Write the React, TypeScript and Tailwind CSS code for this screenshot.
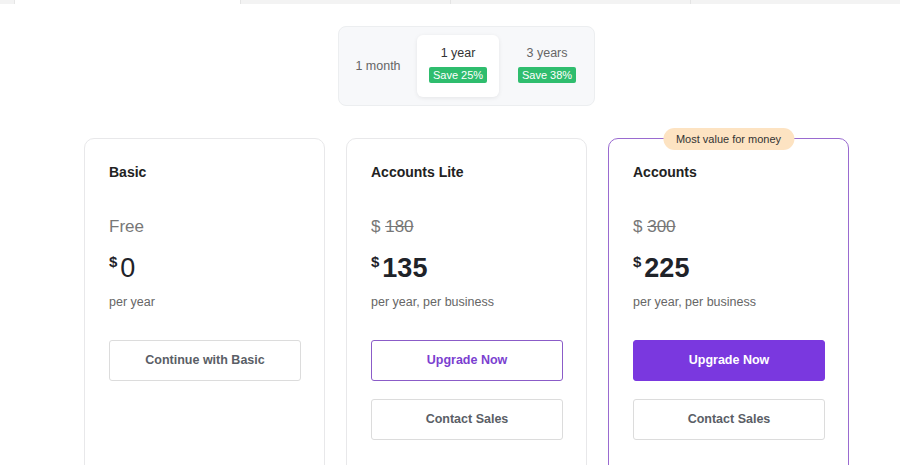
import React from "react";

type Plan = {
  name: string;
  oldPrice?: string;
  freeLabel?: boolean;
  price: string;
  bold: boolean;
  period: string;
  featured?: boolean;
  buttons: { label: string; kind: "outline" | "primary" | "plain" }[];
};

const plans: Plan[] = [
  {
    name: "Basic",
    freeLabel: true,
    price: "0",
    bold: false,
    period: "per year",
    buttons: [{ label: "Continue with Basic", kind: "plain" }],
  },
  {
    name: "Accounts Lite",
    oldPrice: "180",
    price: "135",
    bold: true,
    period: "per year, per business",
    buttons: [
      { label: "Upgrade Now", kind: "outline" },
      { label: "Contact Sales", kind: "plain" },
    ],
  },
  {
    name: "Accounts",
    oldPrice: "300",
    price: "225",
    bold: true,
    period: "per year, per business",
    featured: true,
    buttons: [
      { label: "Upgrade Now", kind: "primary" },
      { label: "Contact Sales", kind: "plain" },
    ],
  },
];

const btnStyles = {
  plain: "border border-[#dcdcdc] text-[#5a5e66] bg-white",
  outline: "border border-[#8b5cc8] text-[#7b3fd0] bg-white",
  primary: "bg-[#7a38df] text-white border border-[#7a38df]",
};

function PlanCard({ plan }: { plan: Plan }) {
  return (
    <div
      className={`relative w-[241px] h-[340px] rounded-[10px] bg-white px-6 pt-[23px] ${
        plan.featured ? "border border-[#9a6bd0]" : "border border-[#e8e8ea]"
      }`}
    >
      {plan.featured && (
        <div className="absolute left-1/2 -translate-x-1/2 -top-[11px] h-[22px] px-[13px] rounded-full bg-[#fde3c2] text-[11px] leading-[22px] text-[#333] whitespace-nowrap">
          Most value for money
        </div>
      )}
      <h3 className="text-[14px] leading-5 font-bold text-[#222]">{plan.name}</h3>

      <div className="mt-[33px] h-6 text-[17px] leading-6 text-[#777]">
        {plan.freeLabel ? (
          "Free"
        ) : (
          <span>
            $ <span className="line-through">{plan.oldPrice}</span>
          </span>
        )}
      </div>

      <div className="mt-[13px] flex items-start h-8 text-[#1f2329]">
        <span className="text-[15px] leading-5 font-bold mr-[3px]">$</span>
        <span className={`text-[27px] leading-8 ${plan.bold ? "font-bold" : "font-normal"}`}>
          {plan.price}
        </span>
      </div>

      <p className="mt-[9px] text-[12.5px] leading-[18px] text-[#666]">{plan.period}</p>

      <div className="mt-[29px] flex flex-col gap-[18px]">
        {plan.buttons.map((b) => (
          <button
            key={b.label}
            className={`w-[192px] h-[41px] rounded-[3px] text-[12.5px] font-bold ${btnStyles[b.kind]}`}
          >
            {b.label}
          </button>
        ))}
      </div>
    </div>
  );
}

export default function App() {
  return (
    <div
      className="w-[900px] h-[465px] overflow-hidden bg-white"
      style={{ fontFamily: '"Liberation Sans", Arial, sans-serif' }}
    >
      {/* tab strip remnant */}
      <div className="flex h-[4px]">
        <div className="w-[15px] bg-[#f3f3f3] border-r border-[#e6e6e6]" />
        <div className="w-[225px] bg-white" />
        <div className="w-[210px] bg-[#f3f3f3] border-l border-[#e4e4e4]" />
        <div className="w-[240px] bg-[#f3f3f3] border-l border-[#e4e4e4]" />
        <div className="flex-1 bg-[#f3f3f3] border-l border-[#e4e4e4]" />
      </div>

      <div className="pl-[33px] flex flex-col items-center">
        {/* billing toggle */}
        <div className="mt-[22px] flex gap-1 pl-1 pr-[3px] py-2 bg-[#f7f8fa] border border-[#eceef0] rounded-lg">
          <div className="w-[70px] h-[62px] flex items-center justify-center text-[12.5px] text-[#666]">
            1 month
          </div>
          <div className="w-[82px] h-[62px] flex flex-col items-center justify-center gap-[6px] bg-white rounded-md shadow-[0_1px_4px_rgba(0,0,0,0.08)] pb-1">
            <span className="text-[12.5px] leading-4 text-[#333]">1 year</span>
            <span className="h-4 px-1 rounded-[2px] bg-[#2fbd6e] text-white text-[11px] leading-4">
              Save 25%
            </span>
          </div>
          <div className="w-[88px] h-[62px] flex flex-col items-center justify-center gap-[6px] pb-1">
            <span className="text-[12.5px] leading-4 text-[#666]">3 years</span>
            <span className="h-4 px-1 rounded-[2px] bg-[#2fbd6e] text-white text-[11px] leading-4">
              Save 38%
            </span>
          </div>
        </div>

        {/* plans */}
        <div className="mt-[32px] flex gap-[21px]">
          {plans.map((p) => (
            <PlanCard key={p.name} plan={p} />
          ))}
        </div>
      </div>
    </div>
  );
}
